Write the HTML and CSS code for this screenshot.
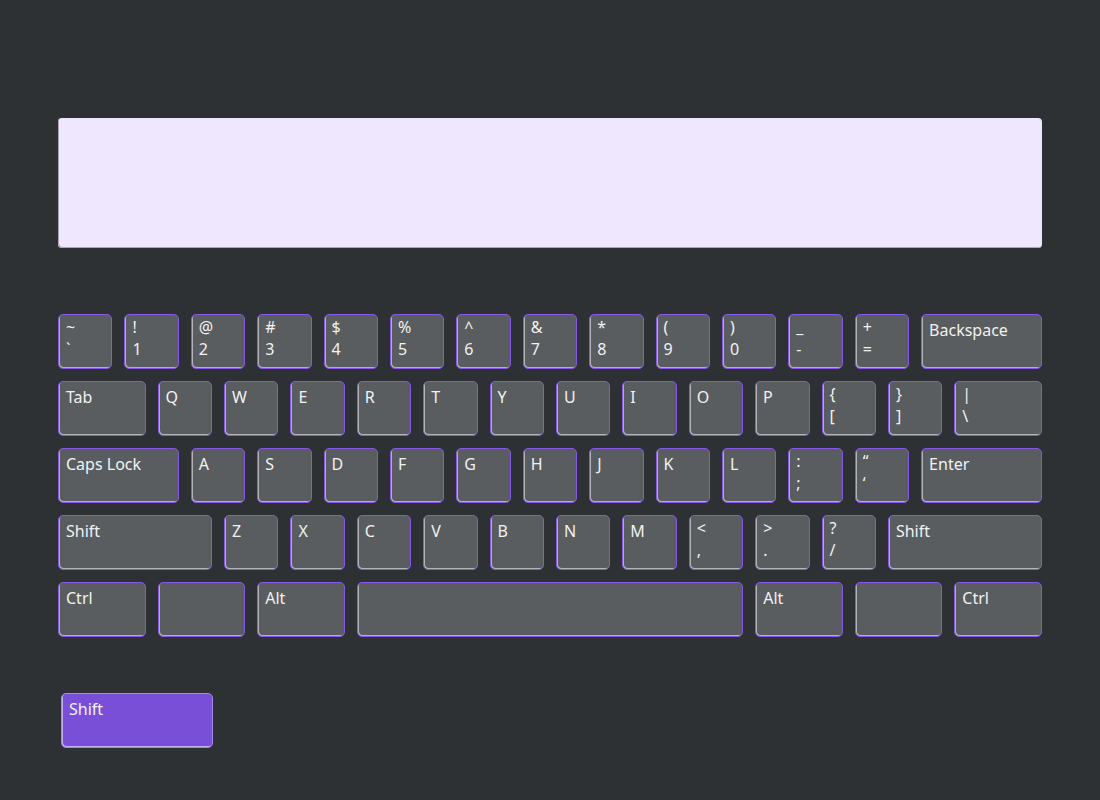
FILE: index.html
```html
<!DOCTYPE html>
<html lang="en">
<head>
<meta charset="utf-8">
<title>Keyboard</title>
<link rel="stylesheet" href="styles.css">
</head>
<body>
<div class="page">
  <div class="display"></div>
  <div class="keyboard">
    <div class="row">
      <div class="key dual"><span>~</span><span>`</span></div>
      <div class="key dual"><span>!</span><span>1</span></div>
      <div class="key dual"><span>@</span><span>2</span></div>
      <div class="key dual"><span>#</span><span>3</span></div>
      <div class="key dual"><span>$</span><span>4</span></div>
      <div class="key dual"><span>%</span><span>5</span></div>
      <div class="key dual"><span>^</span><span>6</span></div>
      <div class="key dual"><span>&amp;</span><span>7</span></div>
      <div class="key dual"><span>*</span><span>8</span></div>
      <div class="key dual"><span>(</span><span>9</span></div>
      <div class="key dual"><span>)</span><span>0</span></div>
      <div class="key dual"><span>_</span><span>-</span></div>
      <div class="key dual"><span>+</span><span>=</span></div>
      <div class="key w2">Backspace</div>
    </div>
    <div class="row">
      <div class="key w15">Tab</div>
      <div class="key">Q</div>
      <div class="key">W</div>
      <div class="key">E</div>
      <div class="key">R</div>
      <div class="key">T</div>
      <div class="key">Y</div>
      <div class="key">U</div>
      <div class="key">I</div>
      <div class="key">O</div>
      <div class="key">P</div>
      <div class="key dual"><span>{</span><span>[</span></div>
      <div class="key dual"><span>}</span><span>]</span></div>
      <div class="key dual w15"><span>|</span><span>\</span></div>
    </div>
    <div class="row">
      <div class="key w2">Caps Lock</div>
      <div class="key">A</div>
      <div class="key">S</div>
      <div class="key">D</div>
      <div class="key">F</div>
      <div class="key">G</div>
      <div class="key">H</div>
      <div class="key">J</div>
      <div class="key">K</div>
      <div class="key">L</div>
      <div class="key dual"><span>:</span><span>;</span></div>
      <div class="key dual"><span>&ldquo;</span><span>&lsquo;</span></div>
      <div class="key w2">Enter</div>
    </div>
    <div class="row">
      <div class="key w25">Shift</div>
      <div class="key">Z</div>
      <div class="key">X</div>
      <div class="key">C</div>
      <div class="key">V</div>
      <div class="key">B</div>
      <div class="key">N</div>
      <div class="key">M</div>
      <div class="key dual"><span>&lt;</span><span>,</span></div>
      <div class="key dual"><span>&gt;</span><span>.</span></div>
      <div class="key dual"><span>?</span><span>/</span></div>
      <div class="key w25">Shift</div>
    </div>
    <div class="row">
      <div class="key w15">Ctrl</div>
      <div class="key w15"></div>
      <div class="key w15">Alt</div>
      <div class="key w6"></div>
      <div class="key w15">Alt</div>
      <div class="key w15"></div>
      <div class="key w15">Ctrl</div>
    </div>
  </div>
  <div class="pressed-area">
    <div class="key w25 active">Shift</div>
  </div>
</div>
</body>
</html>
```

FILE: styles.css
```css
html, body {
  margin: 0;
  padding: 0;
  background: #2e3134;
}

body {
  font-family: "Noto Sans", "Open Sans", sans-serif;
  color: #f2f2f2;
}

.page {
  width: 984px;
  padding: 118px 0 0 58px;
}

.display {
  height: 130px;
  background: #efe7fe;
  border-radius: 4px;
  box-shadow: inset 1px -1px 0 #a9a6b2;
}

.keyboard {
  margin-top: 66px;
  display: flex;
  flex-direction: column;
  gap: 12px;
}

.row {
  display: flex;
  gap: 12px;
}

.key {
  box-sizing: border-box;
  width: 54.4px;
  height: 55px;
  flex: none;
  background: #595d5f;
  border: 1px solid #8758e8;
  border-radius: 5px;
  box-shadow: inset 1px -1px 0 #b5b3ba;
  padding: 4px 7px 0;
  font-size: 16px;
  line-height: 22px;
}

.key.dual {
  display: flex;
  flex-direction: column;
  padding-top: 1px;
  font-size: 16px;
}

.w15 { width: 87.6px; }
.w2 { width: 120.8px; }
.w25 { width: 154px; }
.w6 { width: 386.4px; }

.pressed-area {
  margin-top: 56px;
  padding-left: 3px;
}

.key.active {
  width: 152px;
  background: #7a4fd8;
  border-color: #a786ec;
  box-shadow: inset 1px -1px 0 #c2aef0;
}
```
